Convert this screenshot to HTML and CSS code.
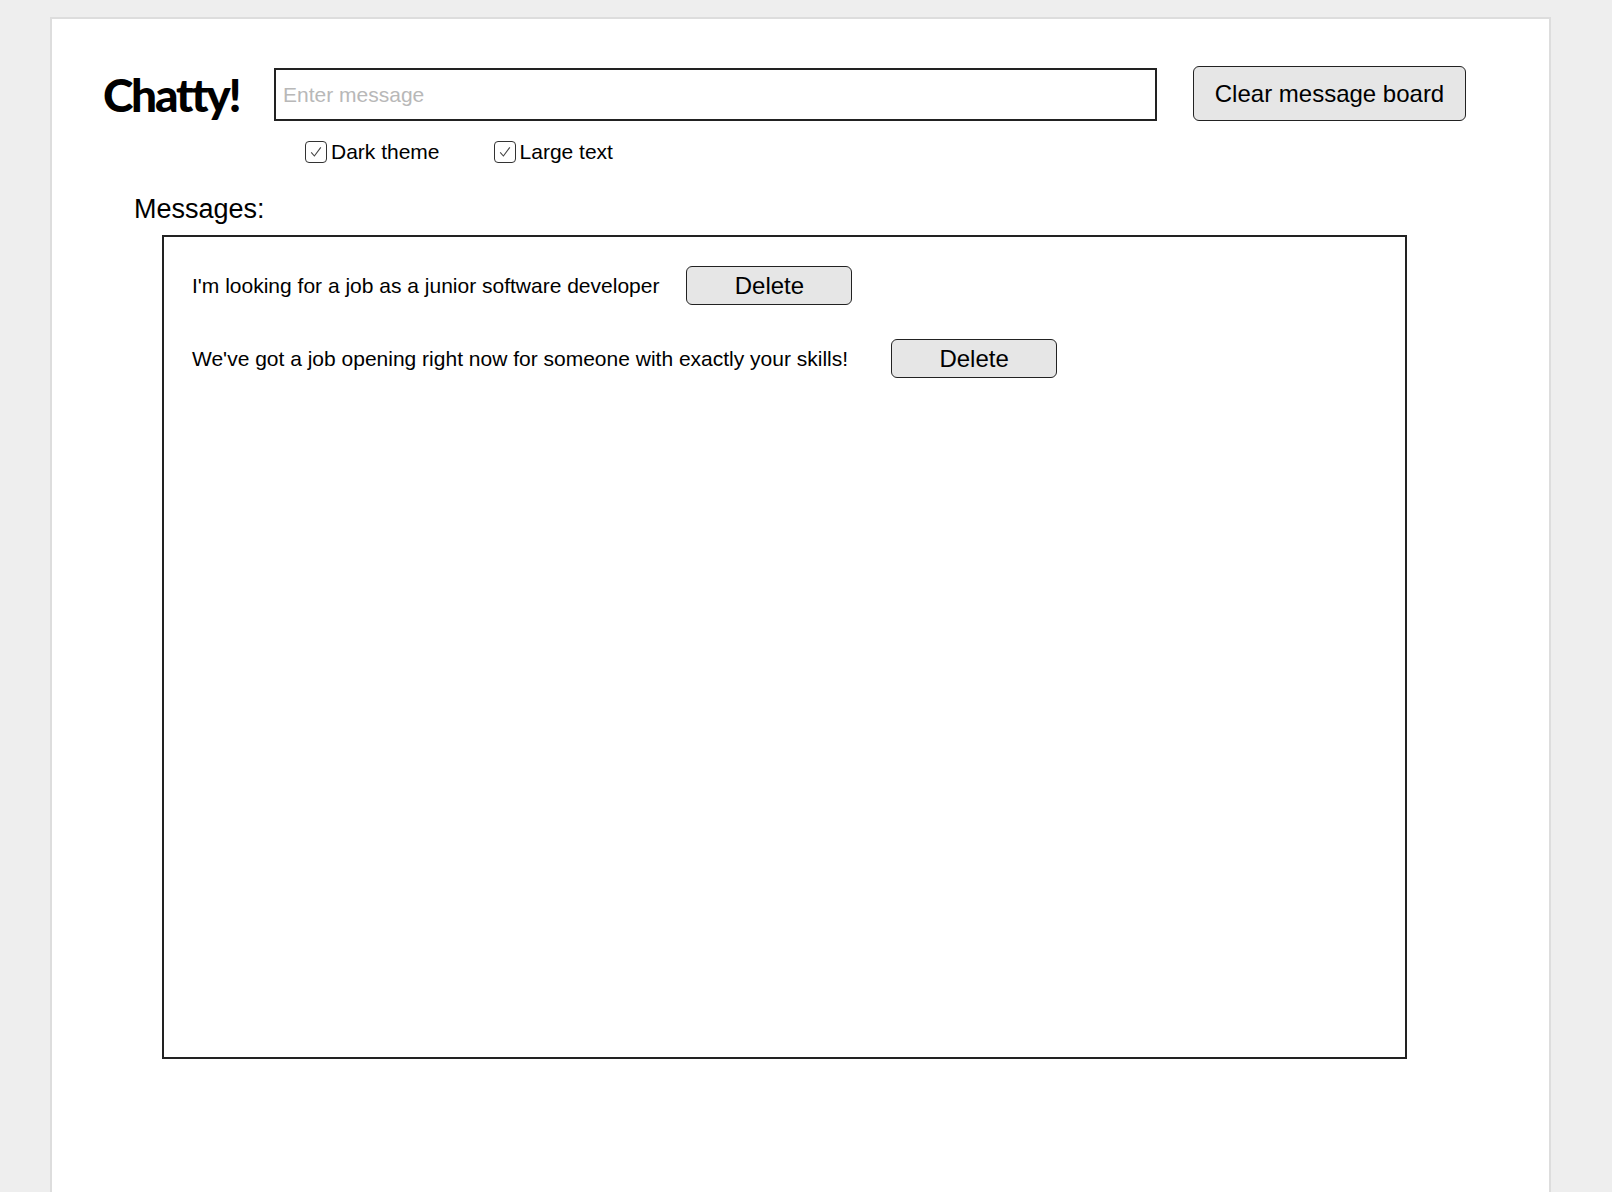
FILE: index.html
```html
<!DOCTYPE html>
<html lang="en">
<head>
<meta charset="utf-8">
<title>Chatty!</title>
<link rel="stylesheet" href="styles.css">
</head>
<body>
<div class="page">
  <div class="top">
    <h1 class="brand">Chatty!</h1>
    <div class="compose">
      <input class="message-input" type="text" placeholder="Enter message">
      <div class="options">
        <label class="option">
          <span class="check"><svg viewBox="0 0 16 16" width="16" height="16"><path d="M3.2 8.4 L6.4 12 L12.8 3.4" fill="none" stroke="#444" stroke-width="1.1"/></svg></span>
          <span>Dark theme</span>
        </label>
        <label class="option">
          <span class="check"><svg viewBox="0 0 16 16" width="16" height="16"><path d="M3.2 8.4 L6.4 12 L12.8 3.4" fill="none" stroke="#444" stroke-width="1.1"/></svg></span>
          <span>Large text</span>
        </label>
      </div>
    </div>
    <button class="btn clear-btn" type="button">Clear message board</button>
  </div>
  <div class="board">
    <h2 class="board-title">Messages:</h2>
    <div class="messages">
      <div class="message">
        <span class="message-text">I'm looking for a job as a junior software developer</span>
        <button class="btn delete-btn" type="button">Delete</button>
      </div>
      <div class="message">
        <span class="message-text">We've got a job opening right now for someone with exactly your skills!</span>
        <button class="btn delete-btn delete-btn--far" type="button">Delete</button>
      </div>
    </div>
  </div>
</div>
</body>
</html>
```

FILE: styles.css
```css
html, body {
  margin: 0;
  padding: 0;
}

body {
  background: #eeeeee;
  font-family: "Liberation Sans", Arial, sans-serif;
  color: #000;
  overflow: hidden;
}

.page {
  box-sizing: border-box;
  margin: 17px 0 0 50px;
  width: 1501px;
  min-height: 1175px;
  background: #fff;
  border: 2px solid #dddddd;
  border-bottom: none;
}

.top {
  display: flex;
  align-items: flex-start;
  padding: 47px 0 0 51px;
}

.brand {
  box-sizing: border-box;
  width: 171px;
  margin: 4px 0 0 0;
  font-family: Lato, "Noto Sans", sans-serif;
  font-weight: 900;
  font-size: 46px;
  line-height: 50px;
  letter-spacing: -2.2px;
}

.compose {
  display: flex;
  flex-direction: column;
}

.message-input {
  box-sizing: border-box;
  width: 883px;
  height: 53px;
  margin: 2px 0 0 0;
  padding: 0 0 0 7px;
  border: 2px solid #222;
  border-radius: 0;
  font-family: "Liberation Sans", Arial, sans-serif;
  font-size: 21px;
  outline: none;
}

.message-input::placeholder {
  color: #b8b8b8;
}

.options {
  display: flex;
  gap: 54px;
  margin-top: 20px;
  padding-left: 31px;
  font-size: 21px;
  line-height: 22px;
}

.option {
  display: flex;
  align-items: center;
  gap: 4px;
}

.check {
  box-sizing: border-box;
  width: 22px;
  height: 22px;
  border: 1.5px solid #333;
  border-radius: 4px;
  display: flex;
  align-items: center;
  justify-content: center;
}

.check svg {
  display: block;
}

.btn {
  box-sizing: border-box;
  background: #e6e6e6;
  border: 1.5px solid #222;
  border-radius: 6px;
  font-family: "Liberation Sans", Arial, sans-serif;
  font-size: 24px;
  color: #000;
  padding: 0;
}

.clear-btn {
  width: 273px;
  height: 55px;
  margin-left: 36px;
}

.board {
  margin-top: 30px;
  padding-left: 82px;
}

.board-title {
  margin: 0;
  font-size: 27px;
  font-weight: 400;
  line-height: 32px;
}

.messages {
  box-sizing: border-box;
  width: 1245px;
  height: 824px;
  margin: 10px 0 0 28px;
  padding: 29px 0 0 28px;
  border: 2px solid #222;
}

.message {
  display: flex;
  align-items: center;
  margin-bottom: 34px;
}

.message-text {
  font-size: 21px;
}

.delete-btn {
  width: 166px;
  height: 39px;
  margin-left: 27px;
}

.delete-btn--far {
  margin-left: 43px;
}
```
